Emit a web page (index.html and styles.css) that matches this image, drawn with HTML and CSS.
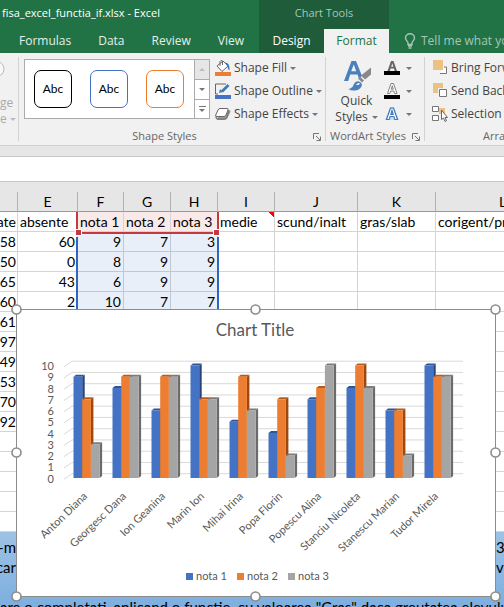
FILE: index.html
```html
<!DOCTYPE html>
<html lang="ro">
<head>
<meta charset="utf-8">
<title>fisa_excel_functia_if.xlsx - Excel</title>
<link rel="stylesheet" href="styles.css">
</head>
<body>
<header class="top">
  <div class="file">fisa_excel_functia_if.xlsx - Excel</div>
  <nav class="tabs">
    <a href="#">Formulas</a><a href="#">Data</a><a href="#">Review</a><a href="#">View</a>
  </nav>
  <div class="context">
    <div class="context-title">Chart Tools</div>
    <nav class="context-tabs"><a href="#">Design</a><a href="#" class="active">Format</a></nav>
  </div>
  <button class="tell">
    <svg width="12" height="16" viewBox="0 0 12 16" fill="none" stroke="#a6c7b5" stroke-width="1.4"><path d="M4 11.5V10C4 8.500 1.500 7.500 1.500 5a4.500 4.200 0 0 1 9 0c0 2.500-2.500 3.500-2.500 5v1.500zM4 13h4M4.500 15h3"/></svg>
    <span>Tell me what you want to do</span>
  </button>
</header>

<main class="ribbon">
  <section class="group change">
    <svg width="5" height="16" viewBox="0 0 5 16" fill="#f8f8f8" stroke="#b8b8b8"><circle cx="-3.500" cy="8" r="7.500"/></svg>
    <span>ge</span>
    <span>e<i class="arrow"></i></span>
  </section>

  <section class="group shapes">
    <div class="row">
      <div class="gallery">
        <button class="style black">Abc</button>
        <button class="style blue">Abc</button>
        <button class="style orange">Abc</button>
        <div class="scroll">
          <button class="off" aria-label="Previous styles"><i class="arrow up"></i></button>
          <button aria-label="Next styles"><i class="arrow"></i></button>
          <button aria-label="More styles"><b class="dash"></b><i class="arrow"></i></button>
        </div>
      </div>
      <div class="commands">
        <button>
          <svg width="18" height="18" viewBox="0 0 18 18"><path d="M3 7l6-5 5 5-6 5.500z" fill="#fff" stroke="#666"/><path d="M6 7V2.500Q7 .5 8.500 2v4" fill="none" stroke="#666"/><path d="M11 3.500q5 0 4.500 8-2-1-2-4z" fill="#3f7ab8"/><path d="M1 13h16v4H1z" fill="#ed7d31"/></svg>
          Shape Fill<i class="arrow"></i></button>
        <button>
          <svg width="18" height="18" viewBox="0 0 18 18"><path d="M12 2H1.500v10H4" fill="none" stroke="#666"/><path d="M5 11l1-4 3 3z" fill="#3f7ab8"/><path d="M7 8.500L13.500 2l2 2L9 10.500z" fill="#3f7ab8"/><path d="M1 13h16v4H1z" fill="#4472c4"/></svg>
          Shape Outline<i class="arrow"></i></button>
        <button>
          <svg width="18" height="18" viewBox="0 0 18 18"><path d="M6 5h10q1 1 0 3l-3 6q-1 1-3 1H3z" fill="#a0a0a0"/><path d="M6 3.500h7q1.500 0 1 1.500l-2 5q-.5 1.500-2 1.500H3q-2 0-1.300-1.500l2.300-5q.5-1.500 2-1.500z" fill="#fff" stroke="#666"/><path d="M2 11.500q0 2.500 2 2.500h6q2 0 3-2l2-6" fill="none" stroke="#777" stroke-width="1.300"/></svg>
          Shape Effects<i class="arrow"></i></button>
      </div>
    </div>
    <div class="label"><span>Shape Styles</span><button aria-label="Shape options" class="launch"><svg width="8" height="8" viewBox="0 0 8 8" fill="none" stroke="#777"><path d="M.5 6V.5H6M3 3l4 4M7.500 3.500v4h-4"/></svg></button></div>
  </section>

  <section class="group wordart">
    <div class="row">
      <button class="quick">
        <svg width="30" height="32" viewBox="0 0 30 32"><path fill-rule="evenodd" d="M2 22L9.500 2h4.500l6 15-3 2.500-1.500-4H8.200L6.200 22zM9.200 12.300h5L11.800 5.500z" fill="#4a80bb"/><path d="M29 8.500v7l-6 5-4-4z" fill="#888"/><path d="M18 17.500l4 4-2 2-4-4z" fill="#888"/><path d="M6.500 30q4-1 5-4 2-4.500 5.500-3.500 4 1.500 2.500 5-2.500 4.500-8 4-3 0-5-1.500z" fill="#4a80bb"/><path d="M14 26q2-3 4-1.500-1 2-4 1.500z" fill="#fff"/></svg>
        <span>Quick</span>
        <span>Styles<i class="arrow"></i></span>
      </button>
      <div class="letters">
        <button aria-label="Text Fill"><svg width="16" height="18" viewBox="0 0 16 18"><path fill-rule="evenodd" d="M3.500 12L7 2h2.500L13 12h-2.300l-.8-2.500H6.600L5.800 12zM7.200 7.700h2.100l-1-3.400z" fill="#666"/><path d="M0 12h16v4H0z"/></svg><i class="arrow"></i></button>
        <button aria-label="Text Outline"><svg width="16" height="18" viewBox="0 0 16 18"><path fill-rule="evenodd" d="M3.500 11.500L7 1.500h2.500l3.500 10h-2.300l-.8-2.500H6.600l-.8 2.500zM7.200 7.200h2.100l-1-3.400z" fill="#fff" stroke="#777" stroke-width=".9"/><path d="M0 13h16v4H0z"/></svg><i class="arrow"></i></button>
        <button aria-label="Text Effects"><svg width="16" height="18" viewBox="0 0 16 18"><path d="M1 15L6 2h4l5 13z" fill="#c9dcf2"/><path fill-rule="evenodd" d="M2.500 14.500L6.500 3h3l4 11.500h-2.700l-.9-3H6.100l-.9 3zM6.800 9.500h2.400L8 5.500z" fill="#fff" stroke="#3f7ab8" stroke-width="1.200"/></svg><i class="arrow"></i></button>
      </div>
    </div>
    <div class="label"><span>WordArt Styles</span><button aria-label="WordArt options" class="launch"><svg width="8" height="8" viewBox="0 0 8 8" fill="none" stroke="#777"><path d="M.5 6V.5H6M3 3l4 4M7.500 3.500v4h-4"/></svg></button></div>
  </section>

  <section class="group arrange">
    <div class="commands">
      <button><svg width="16" height="18" viewBox="0 0 16 18"><path d="M8 14.500h6.500V8H12" fill="#fff" stroke="#777"/><path d="M1 1h10v10H1z" fill="#eac282"/></svg>Bring Forward</button>
      <button><svg width="16" height="18" viewBox="0 0 16 18"><path d="M1 1h10v10H1z" fill="#eac282"/><path d="M6 6h9v10H6z" fill="#f1f1f1"/><path d="M7.500 7.500h7v7h-7z" fill="#fff" stroke="#777"/></svg>Send Backward</button>
      <button><svg width="16" height="18" viewBox="0 0 16 18"><path d="M.5 1.500h6v5h-6zM.5 10.500h6v5h-6z" fill="#fff" stroke="#777"/><path d="M7 3h6v6H7z" fill="#eac282"/><path d="M9.500 5v9.500l2-1.500 1.500 3.500 1.500-.8-1.500-3.200h2.500z" fill="#fff" stroke="#666"/></svg>Selection Pane</button>
    </div>
    <div class="label"><span>Arrange</span></div>
  </section>
</main>

<input class="formula" aria-label="Formula bar">

<div class="sheet">
  <table>
    <colgroup><col class="w-d"><col class="w-e"><col class="w-f"><col class="w-g"><col class="w-g"><col class="w-i"><col class="w-j"><col class="w-k"><col></colgroup>
    <thead><tr><th></th><th>E</th><th>F</th><th>G</th><th>H</th><th>I</th><th>J</th><th>K</th><th>L</th></tr></thead>
    <tbody id="cells"></tbody>
  </table>
  <div class="range names"></div>
  <div class="range values"></div>
  <div class="notes">
    <p><span>-m</span><span>3</span></p>
    <p><span>car</span><span>vului</span></p>
    <p class="long">are o completati, aplicand o functie, cu valoarea "Gras" daca greutatea elevului</p>
  </div>
  <svg class="chart" id="chart" width="492" height="300" viewBox="10 303 492 300" role="img" aria-label="Chart Title"></svg>
</div>
<script src="app.js"></script>
</body>
</html>
```
FILE: styles.css
```css
* { box-sizing: border-box; }
body {
  margin: 0;
  height: 100vh;
  overflow: hidden;
  display: flex;
  flex-direction: column;
  background: #e6e6e6;
  color: #444;
  font: 12px/16px "Open Sans", "Noto Sans", sans-serif;
}
button {
  padding: 0;
  border: 0;
  background: none;
  color: inherit;
  font: inherit;
  white-space: nowrap;
}
a { color: inherit; text-decoration: none; }
i.arrow {
  display: inline-block;
  border: 3px solid transparent;
  border-top-color: #777;
  border-bottom: 0;
  margin-left: 4px;
  vertical-align: middle;
}
i.arrow.up { border-top: 0; border-bottom: 3px solid #bbb; }

.top {
  flex: none;
  display: grid;
  grid-template-columns: 259px 130px 1fr;
  grid-template-rows: 29px 24px;
  background: #217346;
  color: #e4f0e9;
  white-space: nowrap;
  overflow: hidden;
}
.file { padding: 5px 2px; color: #fff; font-size: 11px; }
.tabs { grid-row: 2; display: flex; gap: 27px; padding: 4px 0 0 19px; }
.context {
  grid-column: 2;
  grid-row: 1 / 3;
  display: grid;
  grid-template-rows: 29px 24px;
  background: #1e5c3a;
  text-align: center;
}
.context-title { padding-top: 5px; color: #a6c7b5; font-size: 11px; }
.context-tabs { display: grid; grid-template-columns: 1fr 1fr; }
.context-tabs a { padding-top: 4px; color: #fff; }
.context-tabs .active { background: #f1f1f1; color: #217346; }
.tell {
  grid-column: 3;
  grid-row: 2;
  display: flex;
  align-items: center;
  gap: 5px;
  padding-left: 15px;
  color: #a6c7b5;
}

.ribbon {
  flex: none;
  display: flex;
  height: 93px;
  padding: 4px 0;
  background: #f1f1f1;
  border-bottom: 1px solid #d2d2d2;
  overflow: hidden;
}
.group {
  flex: none;
  display: flex;
  flex-direction: column;
  justify-content: space-between;
  border-right: 1px solid #d2d2d2;
}
.row { display: flex; }
.label { position: relative; text-align: center; font-size: 11px; color: #666; white-space: nowrap; }
.launch { position: absolute; right: 4px; bottom: 0; line-height: 8px; }
.launch svg { display: block; margin-bottom: 3px; }
.change { width: 19px; justify-content: flex-start; color: #aaa; white-space: nowrap; }
.change svg { margin: 4px 0 18px; }
.change .arrow { margin-left: 3px; border-top-color: #bbb; }
.shapes { width: 307px; }
.shapes .row { padding: 2px 0 0 5px; gap: 5px; }
.shapes .label { padding-right: 15px; }
.gallery {
  display: flex;
  align-items: center;
  gap: 18px;
  width: 186px;
  height: 60px;
  padding-left: 9px;
  border: 1px solid #ababab;
  background: #fff;
}
.style {
  flex: none;
  width: 38px;
  height: 38px;
  border: 1px solid;
  border-radius: 7px;
  font: 12px/16px Lato, sans-serif;
}
.black { border-color: #000; }
.blue { border-color: #4472c4; }
.orange { border-color: #ed7d31; }
.style { color: #000; }
.scroll {
  display: grid;
  grid-template-rows: 1fr 1fr 1fr;
  width: 15px;
  height: 58px;
  margin-left: -8px;
  border-left: 1px solid #ababab;
}
.scroll button { display: flex; flex-direction: column; align-items: center; justify-content: center; gap: 2px; }
.scroll button + button { border-top: 1px solid #ababab; }
.scroll .off { background: #e6e6e6; }
.scroll .arrow { margin: 0; }
.dash { width: 7px; height: 1px; background: #777; }
.commands { display: grid; grid-auto-rows: 23px; align-content: start; justify-items: start; }
.commands button { display: flex; align-items: center; height: 18px; gap: 2px; }
.shapes .commands { margin-left: -1px; }
.commands .arrow { margin-left: 1px; }
.wordart { width: 99px; }
.quick { display: flex; flex-direction: column; align-items: center; width: 55px; padding-top: 2px; margin-left: 3px; }
.quick svg { margin-bottom: 2px; }
.letters { display: grid; grid-auto-rows: 23px; align-content: start; padding-top: 2px; }
.letters button { display: flex; align-items: center; height: 18px; gap: 2px; }
.wordart .label { text-align: left; padding-left: 4px; }
.arrange { width: 150px; padding-left: 7px; border: 0; }
.arrange .commands { padding-top: 2px; }
.arrange .commands button { gap: 3px; }

.formula {
  flex: none;
  width: 100%;
  height: 26px;
  margin-top: 10px;
  border: 1px solid #c6c6c6;
  border-width: 1px 0;
  background: #fff;
}

.sheet {
  position: relative;
  flex: 1;
  margin-top: 10px;
  display: flex;
  flex-direction: column;
  overflow: hidden;
  background: #fff;
  color: #000;
  font: 14px/20px Lato, sans-serif;
}
table { flex: none; width: 570px; table-layout: fixed; border-collapse: separate; border-spacing: 0; }
.w-d { width: 18px; }
.w-e { width: 60px; }
.w-f { width: 46px; }
.w-g { width: 47px; }
.w-i { width: 57px; }
.w-j { width: 83px; }
.w-k { width: 78px; }
th {
  height: 20px;
  padding: 0;
  background: #e6e6e6;
  border-right: 1px solid #b1b1b1;
  border-bottom: 1px solid #999;
  font-weight: 400;
  line-height: 19px;
}
td {
  height: 20px;
  padding: 0 2px;
  border-right: 1px solid #d4d4d4;
  border-bottom: 1px solid #d4d4d4;
  line-height: 19px;
  text-align: right;
  white-space: nowrap;
}
td:first-child { direction: rtl; overflow: hidden; }
.head td:not(:first-child) { text-align: left; }
.head .pink { background: #f9e9e9; }
.shade { background: #e8eff9; border-color: #c0c8d4; }
.comment { background: linear-gradient(225deg, #f00 4px, transparent 4px); }
.range { position: absolute; left: 76px; width: 143px; }
.names { top: 20px; height: 22px; border: 2px solid #c03a40; border-top: 0; }
.names::before, .names::after {
  content: "";
  position: absolute;
  bottom: -3px;
  width: 5px;
  height: 5px;
  background: #c03a40;
  outline: 1px solid #fff;
}
.names::before { left: -2px; }
.names::after { right: -2px; }
.values { top: 45px; height: 75px; border: 2px solid #2e66c2; border-width: 0 2px; }
.notes {
  flex: 1;
  padding-top: 5px;
  background: linear-gradient(#9dc3e6, #7badde 80px);
  font-size: 15px;
}
.notes p { margin: 0; height: 20px; display: grid; grid-template-columns: 16px 1fr; gap: 480px; white-space: nowrap; }
.notes span:first-child { justify-self: end; }
.notes .long { display: block; margin-top: 20px; }
.chart { position: absolute; left: 10px; top: 111px; font-family: Lato, sans-serif; fill: #595959; }
.axis { font-size: 11px; }
.title { font-size: 17px; }
```
FILE: app.js
```js
const rows = [
  ["ate", "absente", "nota 1", "nota 2", "nota 3", "medie", "scund/inalt", "gras/slab", "corigent/promovat"],
  [58, 60, 9, 7, 3], [50, 0, 8, 9, 9], [65, 43, 6, 9, 9], [60, 2, 10, 7, 7],
  [61], [97], [49], [53], [70], [92], [], [], [], [], []
];
document.getElementById("cells").innerHTML = rows.map((row, r) => {
  let cells = "";
  for (let c = 0; c < 9; c++) {
    let cls = "";
    if (c > 1 && c < 5 && r < 5) cls = r ? "shade" : "pink";
    if (r === 0 && c === 5) cls = "comment";
    cells += `<td class="${cls}">${row[c] ?? ""}</td>`;
  }
  return `<tr class="${r ? "" : "head"}">${cells}</tr>`;
}).join("");

const marks = [
  ["Anton Diana", 9, 7, 3], ["Georgesc Dana", 8, 9, 9], ["Ion Geanina", 6, 9, 9],
  ["Marin Ion", 10, 7, 7], ["Mihai Irina", 5, 9, 6], ["Popa Florin", 4, 7, 2],
  ["Popescu Alina", 7, 8, 10], ["Stanciu Nicoleta", 8, 10, 8],
  ["Stanescu Marian", 6, 6, 2], ["Tudor Mirela", 10, 9, 9]
];
// front, top and side face of each series
const faces = [["#4472c4", "#2f5597", "#264478"], ["#ed7d31", "#b85a1c", "#9e480e"], ["#a5a5a5", "#7b7b7b", "#6b6b6b"]];
const step = 11.25, floor = 478, barW = 8.7;

let out = `<rect x="16.500" y="309.500" width="479" height="287" fill="#fff" stroke="#8c8c8c"/>
<text class="title" x="255" y="336" text-anchor="middle">Chart Title</text>`;
for (let v = 0; v <= 10; v++) {
  const y = 473.7 - v * step;
  out += `<path d="M64 ${y + 5.5}L72 ${y}H463" fill="none" stroke="#d9d9d9"/>
  <text class="axis" x="54" y="${y + 9}" text-anchor="end">${v}</text>`;
}
marks.forEach(([name, ...values], i) => {
  values.forEach((v, s) => {
    const x = 73.5 + i * 39 + s * barW, y = floor - v * step, [front, top, side] = faces[s];
    out += `<path fill="${side}" d="M${x + barW} ${y}l2.500-2V${floor - 2}l-2.500 2z"/>
    <path fill="${top}" d="M${x} ${y}l2.500-2h${barW}l-2.500 2z"/>
    <rect fill="${front}" x="${x}" y="${y}" width="${barW}" height="${v * step}"/>`;
  });
  const tx = 88 + i * 39;
  out += `<text class="axis" x="${tx}" y="497" text-anchor="end" transform="rotate(-44 ${tx} 497)">${name}</text>`;
});
faces.forEach(([color], s) => {
  const x = 186 + s * 51;
  out += `<rect x="${x}" y="573" width="7" height="7" fill="${color}"/><text class="axis" x="${x + 10}" y="580">nota ${s + 1}</text>`;
});
[[16, 309], [255, 309], [495, 309], [16, 452], [495, 452], [16, 596], [255, 596], [495, 596]].forEach(([x, y]) => {
  out += `<circle cx="${x + 0.5}" cy="${y + 0.5}" r="4.500" fill="#fff" stroke="#8c8c8c" stroke-width="1.600"/>`;
});
document.getElementById("chart").innerHTML = out;
```
